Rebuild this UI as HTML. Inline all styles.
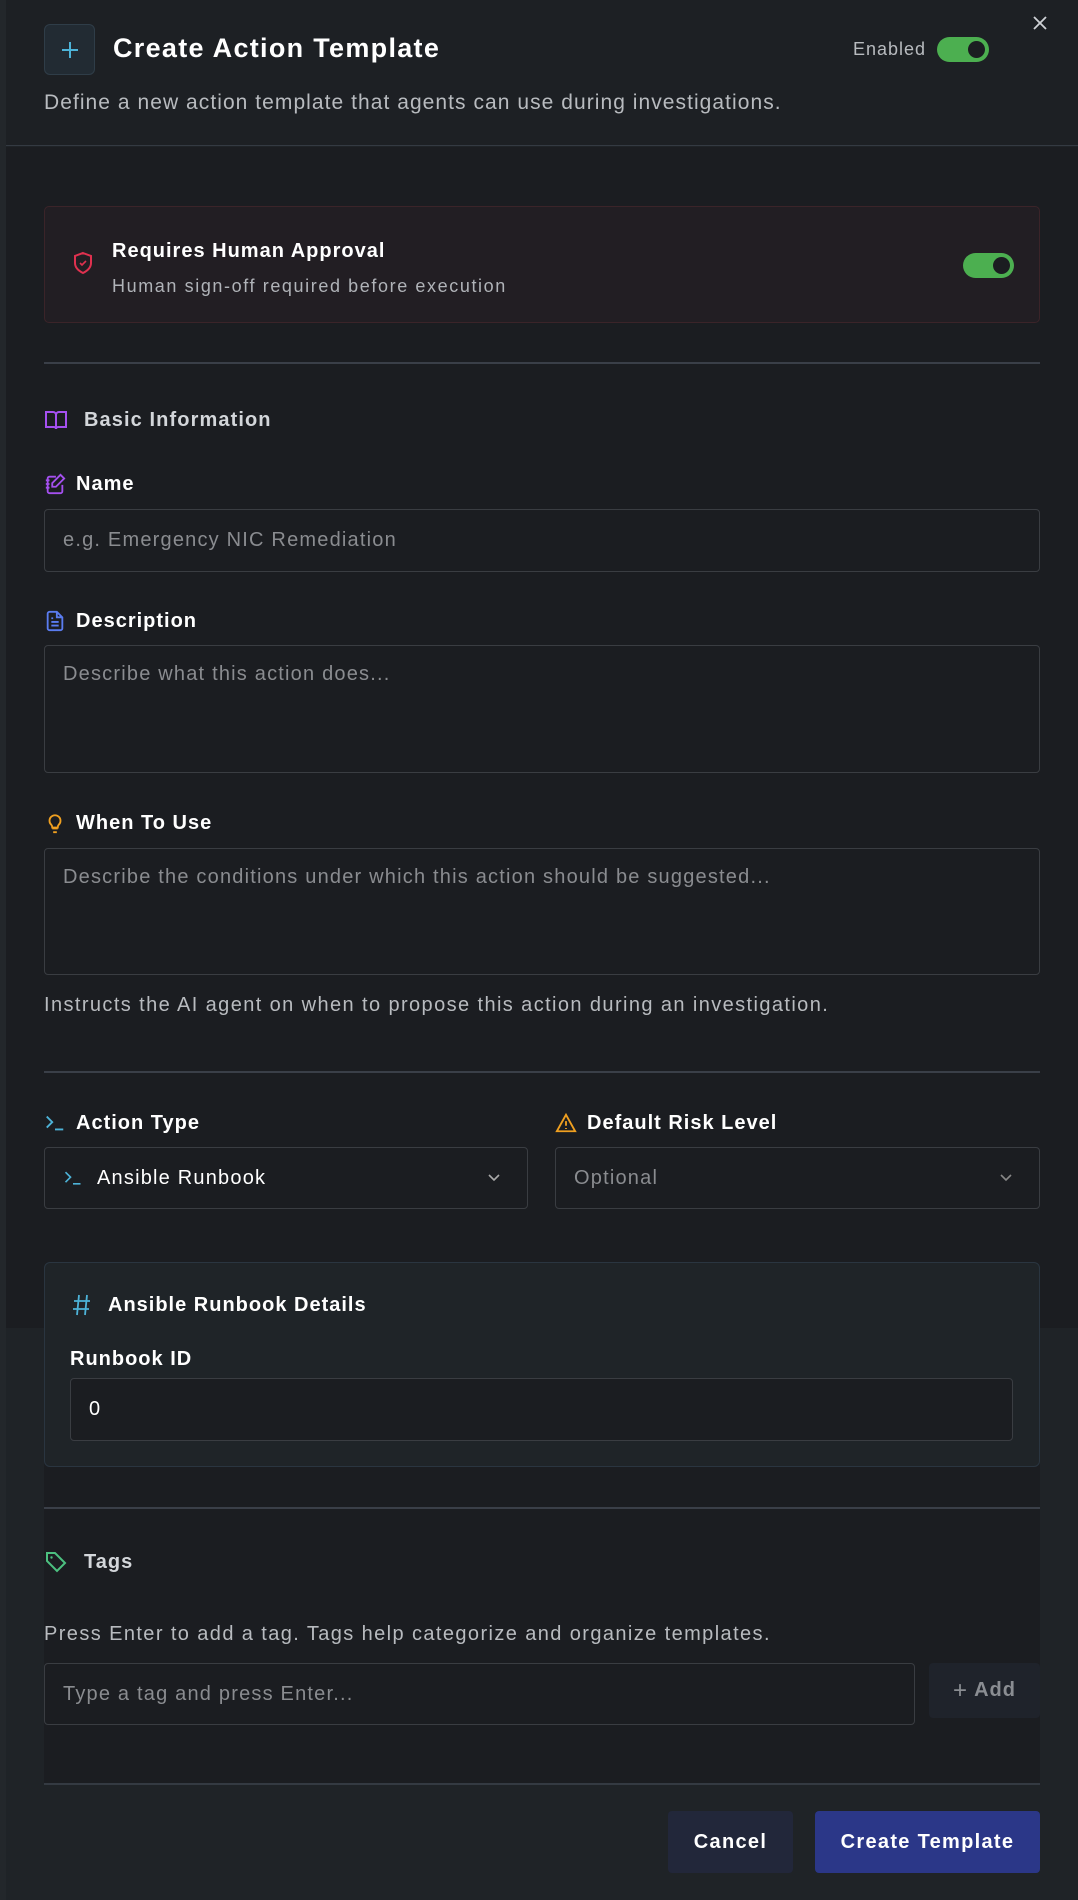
<!DOCTYPE html>
<html><head><meta charset="utf-8"><style>
*{box-sizing:border-box;margin:0;padding:0}
body{width:1078px;height:1900px;background:#1f2327;font-family:"Liberation Sans",sans-serif;position:relative;overflow:hidden;color:#fff;letter-spacing:1px}
.a{position:absolute;white-space:nowrap}
.strip{left:0;top:0;width:6px;height:1900px;background:#23272b}
.hdr{left:6px;top:0;width:1072px;height:146px;background:#1d2024;border-bottom:1px solid #343a42}
.body{left:6px;top:147px;width:1072px;height:1181px;background:#1b1d21}
.body2{left:44px;top:1328px;width:996px;height:456px;background:#1b1d21}
.lbl{font-size:20px;font-weight:bold;color:#fff;display:flex;align-items:center;gap:10px;height:24px}
.inp{border:1px solid #3a3d42;border-radius:4px;background:#1b1d21;color:#8a8c90;font-size:20px;padding-left:18px;display:flex;align-items:center;letter-spacing:1.2px}
.ta{align-items:flex-start;padding-top:17px}
.hr{height:2px;background:#3a3f48;left:44px;width:996px}
.tog{border-radius:13px;background:#4caf50}
.tog i{position:absolute;right:4px;top:4px;border-radius:50%;background:#1b1d21}
.help{font-size:20px;color:#b8bbbf;letter-spacing:1.4px}
</style></head><body>
<div class="a strip"></div>
<div class="a hdr"></div>
<div class="a body"></div>
<div class="a body2"></div>

<div class="a" style="left:44px;top:24px;width:51px;height:51px;border:1px solid #2f3d48;border-radius:6px;background:#222b33"></div>
<svg class="a" style="left:58px;top:38px" width="24" height="24"><path d="M12 4v16M4 12h16" stroke="#4db3d8" stroke-width="2"/></svg>
<div class="a" style="left:113px;top:33px;font-size:27px;font-weight:bold;letter-spacing:1.3px">Create Action Template</div>
<div class="a" style="left:853px;top:39px;font-size:18px;color:#b8bbbf">Enabled</div>
<div class="a tog" style="left:937px;top:37px;width:52px;height:25px"><i style="width:17px;height:17px"></i></div>
<svg class="a" style="left:1031px;top:14px" width="18" height="18"><path d="M3 3l12 12M15 3L3 15" stroke="#cfd2d6" stroke-width="1.8"/></svg>
<div class="a" style="left:44px;top:91px;font-size:21px;color:#b8bbbf;letter-spacing:1.05px">Define a new action template that agents can use during investigations.</div>

<div class="a" style="left:44px;top:206px;width:996px;height:117px;background:#221e23;border:1px solid #3b2429;border-radius:5px"></div>
<svg class="a" style="left:72px;top:251px" width="22" height="24" viewBox="0 0 22 24"><path d="M11 2l8 3v7c0 5-4 8-8 10-4-2-8-5-8-10V5z" fill="none" stroke="#e0314f" stroke-width="2"/><path d="M8 12l2 2 4-4" fill="none" stroke="#e0314f" stroke-width="1.6"/></svg>
<div class="a" style="left:112px;top:240px;font-size:20px;font-weight:bold">Requires Human Approval</div>
<div class="a" style="left:112px;top:276px;font-size:18px;color:#b0b3b8;letter-spacing:1.6px">Human sign-off required before execution</div>
<div class="a tog" style="left:963px;top:253px;width:51px;height:25px"><i style="width:17px;height:17px"></i></div>

<div class="a hr" style="top:362px"></div>

<div class="a lbl" style="left:44px;top:408px;color:#d3d6da">
<svg width="24" height="24" viewBox="0 0 24 24"><path d="M2 4h7a3 3 0 013 3v14a2 2 0 00-2-2H2zM22 4h-7a3 3 0 00-3 3v14a2 2 0 012-2h8z" fill="none" stroke="#a550f0" stroke-width="2"/></svg><span style="margin-left:6px;letter-spacing:1.1px">Basic Information</span></div>

<div class="a lbl" style="left:44px;top:472px"><svg width="22" height="22" viewBox="0 0 24 24"><path d="M13 4H6a2 2 0 00-2 2v14a2 2 0 002 2h12a2 2 0 002-2v-7M18 2l4 4-9 9H9v-4zM2 8h4M2 12h4M2 16h4" fill="none" stroke="#a550f0" stroke-width="2"/></svg>Name</div>
<div class="a inp" style="left:44px;top:509px;width:996px;height:63px">e.g. Emergency NIC Remediation</div>

<div class="a lbl" style="left:44px;top:609px"><svg width="22" height="22" viewBox="0 0 24 24"><path d="M14 2H6a2 2 0 00-2 2v16a2 2 0 002 2h12a2 2 0 002-2V8zM14 2v6h6M8 13h8M8 17h8M8 9h2" fill="none" stroke="#5a7cf0" stroke-width="2"/></svg>Description</div>
<div class="a inp ta" style="left:44px;top:645px;width:996px;height:128px">Describe what this action does...</div>

<div class="a lbl" style="left:44px;top:811px"><svg width="22" height="22" viewBox="0 0 24 24"><path d="M9 18h6M10 22h4M8 14a6 6 0 118 0c-1 1-1 2-1 3H9c0-1 0-2-1-3z" fill="none" stroke="#f0a020" stroke-width="2"/></svg>When To Use</div>
<div class="a inp ta" style="left:44px;top:848px;width:996px;height:127px">Describe the conditions under which this action should be suggested...</div>
<div class="a help" style="left:44px;top:994px">Instructs the AI agent on when to propose this action during an investigation.</div>

<div class="a hr" style="top:1071px"></div>

<div class="a lbl" style="left:44px;top:1111px"><svg width="22" height="22" viewBox="0 0 24 24"><path d="M3 5l6 6-6 6M12 19h9" fill="none" stroke="#4db3d8" stroke-width="2"/></svg>Action Type</div>
<div class="a lbl" style="left:555px;top:1111px"><svg width="22" height="22" viewBox="0 0 24 24"><path d="M12 3L2 21h20zM12 10v5M12 17.5v1" fill="none" stroke="#f0a020" stroke-width="2"/></svg>Default Risk Level</div>
<div class="a inp" style="left:44px;top:1147px;width:484px;height:62px;color:#fff;gap:14px"><svg width="20" height="20" viewBox="0 0 24 24"><path d="M3 5l6 6-6 6M12 19h9" fill="none" stroke="#4db3d8" stroke-width="2"/></svg>Ansible Runbook</div>
<svg class="a" style="left:486px;top:1170px" width="16" height="16"><path d="M3 5l5 5 5-5" fill="none" stroke="#aaa" stroke-width="1.6"/></svg>
<div class="a inp" style="left:555px;top:1147px;width:485px;height:62px">Optional</div>
<svg class="a" style="left:998px;top:1170px" width="16" height="16"><path d="M3 5l5 5 5-5" fill="none" stroke="#888" stroke-width="1.6"/></svg>

<div class="a" style="left:44px;top:1262px;width:996px;height:205px;background:#1f2428;border:1px solid #2a3540;border-radius:6px"></div>
<svg class="a" style="left:72px;top:1293px" width="20" height="24" viewBox="0 0 20 24"><path d="M7 2L5 22M15 2l-2 20M2 8h16M1 16h16" stroke="#4db3d8" stroke-width="1.8"/></svg>
<div class="a lbl" style="left:108px;top:1293px">Ansible Runbook Details</div>
<div class="a lbl" style="left:70px;top:1347px">Runbook ID</div>
<div class="a inp" style="left:70px;top:1378px;width:943px;height:63px;color:#fff">0</div>

<div class="a hr" style="top:1507px"></div>
<div class="a lbl" style="left:44px;top:1550px;color:#d3d6da"><svg width="24" height="24" viewBox="0 0 24 24"><path d="M3 3h8l10 10-8 8L3 11z" fill="none" stroke="#4cc080" stroke-width="2"/><circle cx="7.5" cy="7.5" r="1.2" fill="#4cc080"/></svg><span style="margin-left:6px">Tags</span></div>
<div class="a help" style="left:44px;top:1623px">Press Enter to add a tag. Tags help categorize and organize templates.</div>
<div class="a inp" style="left:44px;top:1663px;width:871px;height:62px">Type a tag and press Enter...</div>
<div class="a" style="left:929px;top:1663px;width:111px;height:55px;background:#1f232b;border-radius:4px;color:#8a8d92;font-size:20px;font-weight:bold;display:flex;align-items:center;justify-content:center"><span style="font-weight:normal;font-size:24px;margin-right:6px">+</span>Add</div>

<div class="a hr" style="top:1783px;background:#343a42"></div>
<div class="a" style="left:668px;top:1811px;width:125px;height:62px;background:#22273a;border-radius:4px;font-size:20px;font-weight:bold;letter-spacing:1.3px;display:flex;align-items:center;justify-content:center">Cancel</div>
<div class="a" style="left:815px;top:1811px;width:225px;height:62px;background:#2b3788;border-radius:4px;font-size:20px;font-weight:bold;letter-spacing:1.3px;display:flex;align-items:center;justify-content:center">Create Template</div>
</body></html>
